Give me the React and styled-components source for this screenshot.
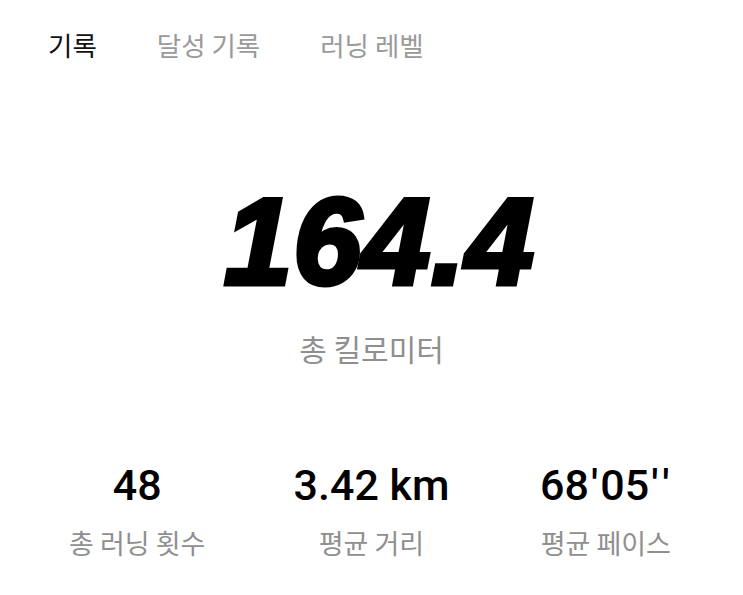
import React from "react";
import styled, { createGlobalStyle } from "styled-components";

const Global = createGlobalStyle`
  html, body { margin: 0; padding: 0; background: #fff; }
  body { font-family: "Noto Sans CJK KR", "Noto Sans", sans-serif; }
`;

const Page = styled.div`
  width: 743px;
  min-height: 595px;
  box-sizing: border-box;
  padding: 0 20px;
  display: flex;
  flex-direction: column;
`;

const Tabs = styled.nav`
  display: flex;
  gap: 60px;
  padding: 29px 0 0 28px;
`;

const Tab = styled.div`
  font-size: 26.5px;
  line-height: 32px;
  color: ${(p) => (p.$active ? "#111" : "#9a9a9a")};
`;

const Hero = styled.section`
  display: flex;
  flex-direction: column;
  align-items: center;
  margin-top: 120px;
`;

const BigNumber = styled.div`
  font-family: "Liberation Sans", Arial, sans-serif;
  font-weight: 700;
  font-style: italic;
  font-size: 122px;
  line-height: 122px;
  letter-spacing: 1px;
  color: #000;
  -webkit-text-stroke: 5px #000;
  padding-left: 16px;
`;

const HeroLabel = styled.div`
  font-size: 30px;
  line-height: 36px;
  color: #8f8f8f;
  margin-top: 27px;
`;

const Stats = styled.section`
  display: grid;
  grid-template-columns: repeat(3, 1fr);
  margin-top: 94px;
`;

const Stat = styled.div`
  display: flex;
  flex-direction: column;
  align-items: center;
`;

const StatValue = styled.div`
  font-family: Roboto, "Liberation Sans", sans-serif;
  font-weight: 500;
  font-size: 43px;
  line-height: 50px;
  color: #000;
`;

const Tick = styled.span`
  margin: 0 2px;
`;

const StatLabel = styled.div`
  font-size: 27px;
  line-height: 32px;
  color: #8f8f8f;
  margin-top: 17px;
`;

const stats = [
  { value: "48", label: "총 러닝 횟수" },
  { value: "3.42 km", label: "평균 거리" },
  { value: "68'05''", label: "평균 페이스" },
];

function renderValue(v) {
  return v.split("").map((ch, i) =>
    ch === "'" ? <Tick key={i}>'</Tick> : <React.Fragment key={i}>{ch}</React.Fragment>
  );
}

export default function App() {
  return (
    <>
      <Global />
      <Page>
        <Tabs>
          <Tab $active>기록</Tab>
          <Tab>달성 기록</Tab>
          <Tab>러닝 레벨</Tab>
        </Tabs>
        <Hero>
          <BigNumber>164.4</BigNumber>
          <HeroLabel>총 킬로미터</HeroLabel>
        </Hero>
        <Stats>
          {stats.map((s) => (
            <Stat key={s.label}>
              <StatValue>{renderValue(s.value)}</StatValue>
              <StatLabel>{s.label}</StatLabel>
            </Stat>
          ))}
        </Stats>
      </Page>
    </>
  );
}
